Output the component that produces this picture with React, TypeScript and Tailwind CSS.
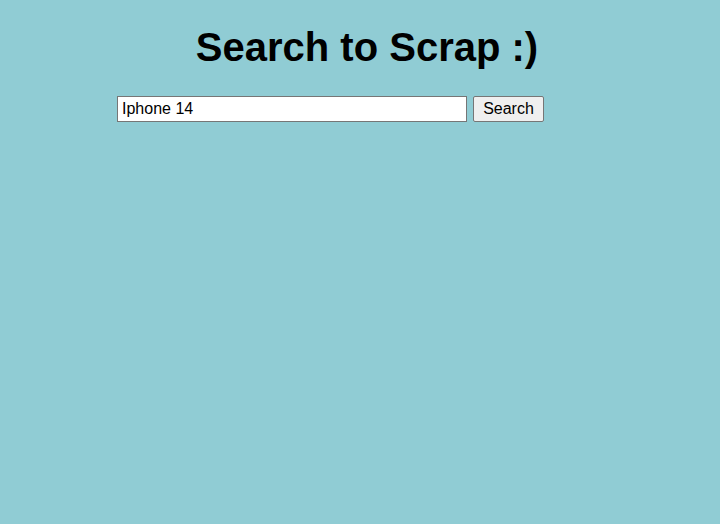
import React, { useState } from 'react';

export default function App() {
  const [query, setQuery] = useState('Iphone 14');

  return (
    <div className="min-h-[524px] w-full bg-[#90ccd4] font-['Liberation_Sans',Arial,sans-serif] text-black">
      <h1 className="pt-[24px] pl-[14px] text-center text-[40px] font-bold leading-[46px]">Search to Scrap :)</h1>
      <form
        className="mt-[26px] flex items-center pl-[117px]"
        onSubmit={(e) => e.preventDefault()}
      >
        <input
          className="h-[26px] w-[350px] border border-[#767676] bg-white px-[4px] text-[16px] outline-none"
          value={query}
          onChange={(e) => setQuery(e.target.value)}
        />
        <button
          type="submit"
          className="ml-[6px] h-[26px] w-[71px] rounded-[2px] border border-[#767676] bg-[#efefef] text-[16px]"
        >
          Search
        </button>
      </form>
    </div>
  );
}
